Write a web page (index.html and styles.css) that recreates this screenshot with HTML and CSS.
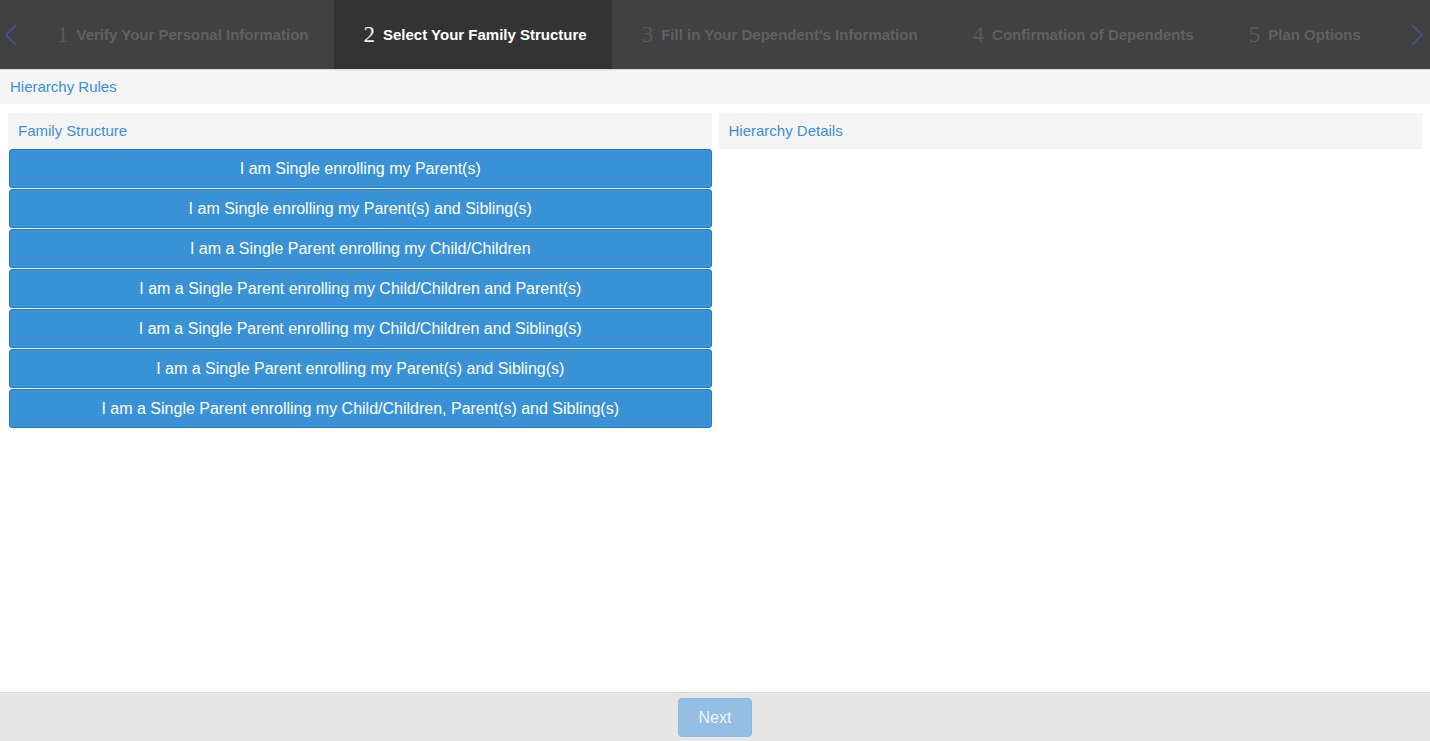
FILE: index.html
```html
<!DOCTYPE html>
<html>
<head>
<meta charset="utf-8">
<link rel="stylesheet" href="styles.css">
</head>
<body>
<div class="page">
  <nav class="steps">
    <div class="arrow arrow-left">
      <svg width="14" height="22" viewBox="0 0 14 22"><path d="M12 1 L2 11 L12 21" fill="none" stroke="#3d5591" stroke-width="1.6"/></svg>
    </div>
    <div class="step"><span class="num">1</span><span class="label">Verify Your Personal Information</span></div>
    <div class="step active"><span class="num">2</span><span class="label">Select Your Family Structure</span></div>
    <div class="step"><span class="num">3</span><span class="label">Fill in Your Dependent's Information</span></div>
    <div class="step"><span class="num">4</span><span class="label">Confirmation of Dependents</span></div>
    <div class="step"><span class="num">5</span><span class="label">Plan Options</span></div>
    <div class="arrow arrow-right">
      <svg width="14" height="22" viewBox="0 0 14 22"><path d="M2 1 L12 11 L2 21" fill="none" stroke="#3d5591" stroke-width="1.6"/></svg>
    </div>
  </nav>
  <div class="rules-bar">Hierarchy Rules</div>
  <main class="content">
    <section class="col">
      <div class="panel-head">Family Structure</div>
      <div class="options">
        <button class="opt">I am Single enrolling my Parent(s)</button>
        <button class="opt">I am Single enrolling my Parent(s) and Sibling(s)</button>
        <button class="opt">I am a Single Parent enrolling my Child/Children</button>
        <button class="opt">I am a Single Parent enrolling my Child/Children and Parent(s)</button>
        <button class="opt">I am a Single Parent enrolling my Child/Children and Sibling(s)</button>
        <button class="opt">I am a Single Parent enrolling my Parent(s) and Sibling(s)</button>
        <button class="opt">I am a Single Parent enrolling my Child/Children, Parent(s) and Sibling(s)</button>
      </div>
    </section>
    <section class="col">
      <div class="panel-head">Hierarchy Details</div>
    </section>
  </main>
  <footer class="footer">
    <button class="next">Next</button>
  </footer>
</div>
</body>
</html>
```
FILE: styles.css
```css
* { box-sizing: border-box; }
html, body { margin: 0; padding: 0; }
body {
  font-family: "Liberation Sans", Arial, sans-serif;
  background: #fff;
}
.page {
  height: 100vh;
  display: flex;
  flex-direction: column;
}
.steps {
  height: 70px;
  background: #414141;
  border-bottom: 1px solid #d9d9d9;
  display: flex;
  align-items: stretch;
  flex-shrink: 0;
}
.arrow {
  display: flex;
  align-items: center;
}
.arrow-left { width: 27px; padding-left: 4px; }
.arrow-right { margin-left: auto; padding-right: 6px; }
.step {
  display: flex;
  align-items: center;
  padding: 0 25px 0 30px;
  color: #606060;
}
.step.active {
  background: #333333;
  color: #ffffff;
}
.num {
  font-family: "Liberation Serif", "Times New Roman", serif;
  font-size: 23px;
  margin-right: 8px;
  color: #5a5a5a;
  margin-top: 1px;
}
.step.active .num { color: #f0f0f0; }
.label {
  font-weight: bold;
  font-size: 15px;
}
.rules-bar {
  height: 34px;
  background: #f4f4f4;
  color: #3a8fd6;
  font-size: 15px;
  padding: 8px 10px 0;
  flex-shrink: 0;
}
.content {
  flex: 1;
  display: flex;
  gap: 7px;
  padding: 9px 8px 0;
}
.col {
  flex: 1;
  display: flex;
  flex-direction: column;
}
.panel-head {
  height: 36px;
  background: #f4f4f4;
  color: #3a8fd6;
  font-size: 15px;
  padding: 9px 10px 0;
}
.options {
  display: flex;
  flex-direction: column;
  padding-left: 1px;
}
.opt {
  height: 39px;
  margin: 0 0 1px;
  background: #3a92d6;
  border: 1px solid #1f7acb;
  border-radius: 3px;
  color: #ffffff;
  font-family: "Liberation Sans", Arial, sans-serif;
  font-size: 16px;
  text-align: center;
  padding: 0;
}
.footer {
  height: 49px;
  background: #e6e6e6;
  border-top: 1px solid #dadada;
  display: flex;
  justify-content: center;
  align-items: flex-start;
  padding-top: 5px;
  flex-shrink: 0;
}
.next {
  width: 74px;
  height: 39px;
  background: #94bee3;
  border: 1px solid #8db8df;
  border-radius: 4px;
  color: #eef4fb;
  font-family: "Liberation Sans", Arial, sans-serif;
  font-size: 16px;
}
```
